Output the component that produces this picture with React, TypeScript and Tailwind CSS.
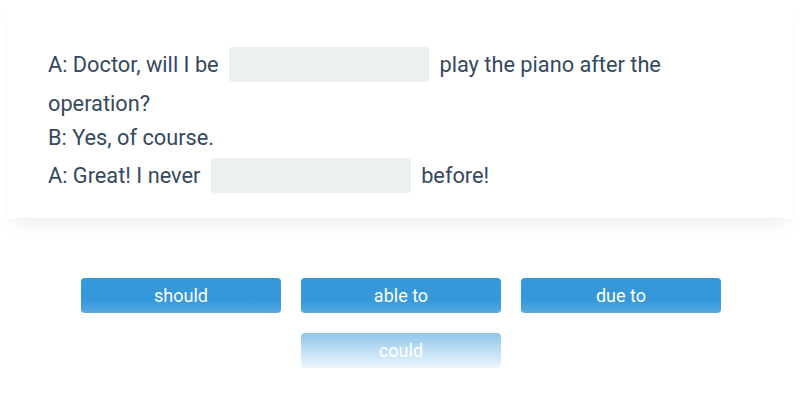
export default function App() {
  const options = ['should', 'able to', 'due to', 'could'];

  return (
    <div className="relative min-h-[400px] bg-white font-['Roboto',sans-serif]">
      <div className="mx-2 bg-white px-10 pt-[45px] pb-[23px] text-[21.75px] text-[#34495e] shadow-[0_12px_18px_-6px_rgba(0,0,0,0.07)]">
        <p className="leading-[39px]">
          A: Doctor, will I be{' '}
          <span className="mx-[5px] inline-block h-[35px] w-[200px] rounded bg-[#ecf0f1] align-[-10px]" />{' '}
          play the piano after the operation?
        </p>
        <p className="leading-[30px]">B: Yes, of course.</p>
        <p className="mt-[4px] leading-[38px]">
          A: Great! I never{' '}
          <span className="mx-[5px] inline-block h-[35px] w-[200px] rounded bg-[#ecf0f1] align-[-10px]" />{' '}
          before!
        </p>
      </div>

      <div className="mx-auto mt-[60px] flex w-[662px] flex-wrap justify-center gap-5 pl-[2px]">
        {options.map((o) => (
          <button
            key={o}
            className="h-[35px] w-[200px] rounded bg-[#3498db] text-[18px] text-white"
          >
            {o}
          </button>
        ))}
      </div>

      <div className="pointer-events-none absolute left-0 right-0 top-[300px] h-[74px] bg-gradient-to-b from-white/0 to-white" />
    </div>
  );
}
